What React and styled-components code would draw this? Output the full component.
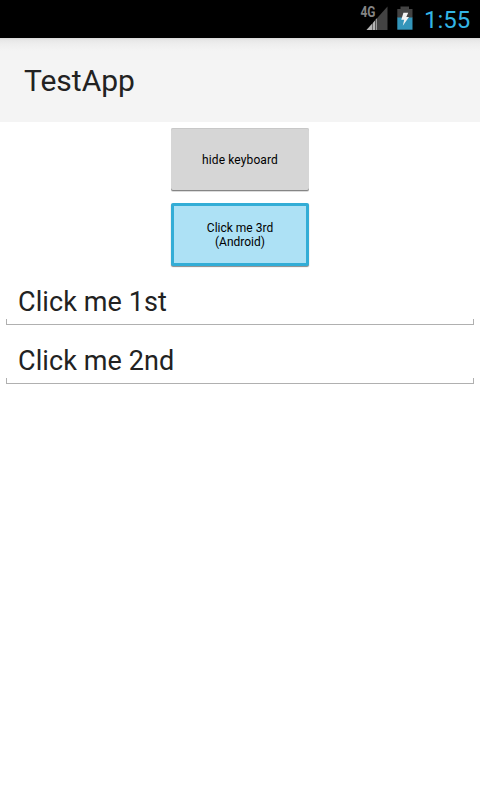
import React from "react";
import styled, { createGlobalStyle } from "styled-components";

const GlobalStyle = createGlobalStyle`
  body { margin: 0; background: #fff; }
  * { box-sizing: border-box; }
`;

const Screen = styled.div`
  width: 480px;
  height: 800px;
  display: flex;
  flex-direction: column;
  background: #fff;
  font-family: Roboto, sans-serif;
  color: #222;
  overflow: hidden;
`;

const StatusBar = styled.header`
  height: 38px;
  flex: none;
  display: flex;
  justify-content: flex-end;
  background: #000;
`;

const StatusIcon = styled.svg`
  display: block;
  flex: none;
`;

const Clock = styled.time`
  width: 63px;
  padding-left: 7px;
  font-size: 24px;
  line-height: 40px;
  color: #33b5e5;
  white-space: nowrap;
`;

const ActionBar = styled.div`
  height: 84px;
  flex: none;
  padding-left: 24px;
  background: linear-gradient(#d6d6d6 0, #e7e7e7 2px, #eeeeee 6px, #f4f4f4 13px);
`;

const Title = styled.h1`
  margin: 0;
  font-size: 30px;
  font-weight: 400;
  line-height: 85px;
`;

const Content = styled.main`
  display: flex;
  flex-direction: column;
  align-items: center;
  padding: 6px 6px 0;
`;

const Button = styled.button`
  width: 138px;
  height: 63px;
  padding: 0;
  margin: 0 0 12px;
  display: flex;
  align-items: center;
  justify-content: center;
  font: 400 12px/14px Roboto, sans-serif;
  letter-spacing: ${(p) => (p.$focused ? "0" : "0.12px")};
  white-space: pre-line;
  color: #000;
  border-radius: 2px;
  border: ${(p) => (p.$focused ? "3px solid #33add6" : "0 solid")};
  background: ${(p) => (p.$focused ? "#ade1f5" : "#d6d6d6")};
  box-shadow: ${(p) =>
    p.$focused
      ? "0 1px 1px #8a8a8a"
      : "inset 0 1px 0 #c8c8c8, inset 0 -1px 0 #858585, 0 1px 0 #dcdcdc"};
`;

const Fields = styled.section`
  display: flex;
  flex-direction: column;
`;

const Field = styled.div`
  width: 468px;
  height: 59px;
  display: flex;
  flex-direction: column;
`;

const FieldText = styled.span`
  height: 41px;
  padding-left: 12px;
  font-size: 27px;
  line-height: 49px;
  letter-spacing: 0.1px;
`;

const FieldLine = styled.div`
  height: 6px;
  border: 1px solid #b0b0b0;
  border-top: 0;
`;

const NetworkLabel = styled.text`
  font: 700 14px Roboto, sans-serif;
  fill: #858585;
`;

function Signal() {
  return (
    <StatusIcon width="32" height="38" viewBox="358 0 32 38">
      <path d="M387.5 6.5V30H366.5Z" fill="#434343" />
      <path d="M372.3 23.5V30H366.5Z" fill="#b5b5b5" />
      <path d="M373 22.7L375 20.5V30H373Z" fill="#b5b5b5" />
      <path d="M375.8 19.5L377 18.2V30H375.8Z" fill="#999" />
      <NetworkLabel x="360.5" y="17.2" textLength="15" lengthAdjust="spacingAndGlyphs">4G</NetworkLabel>
    </StatusIcon>
  );
}

function Battery() {
  return (
    <StatusIcon width="27" height="38" viewBox="390 0 27 38">
      <path d="M400.5 6.5H409V9H412.5V18H397.3V9H400.5Z" fill="#434343" />
      <path d="M397.3 17.5H412.5V29.7H397.3Z" fill="#3395ba" />
      <path d="M403.4 12.7H408.2L406.3 17H409L402.8 25.8L404.2 19.8H401.3Z" fill="#f2f2f2" />
    </StatusIcon>
  );
}

export default function App() {
  return (
    <>
      <GlobalStyle />
      <Screen>
        <StatusBar>
          <Signal />
          <Battery />
          <Clock>1:55</Clock>
        </StatusBar>
        <ActionBar>
          <Title>TestApp</Title>
        </ActionBar>
        <Content>
          <Button>hide keyboard</Button>
          <Button $focused>{"Click me 3rd\n(Android)"}</Button>
          <Fields>
            <Field>
              <FieldText>Click me 1st</FieldText>
              <FieldLine />
            </Field>
            <Field>
              <FieldText>Click me 2nd</FieldText>
              <FieldLine />
            </Field>
          </Fields>
        </Content>
      </Screen>
    </>
  );
}
